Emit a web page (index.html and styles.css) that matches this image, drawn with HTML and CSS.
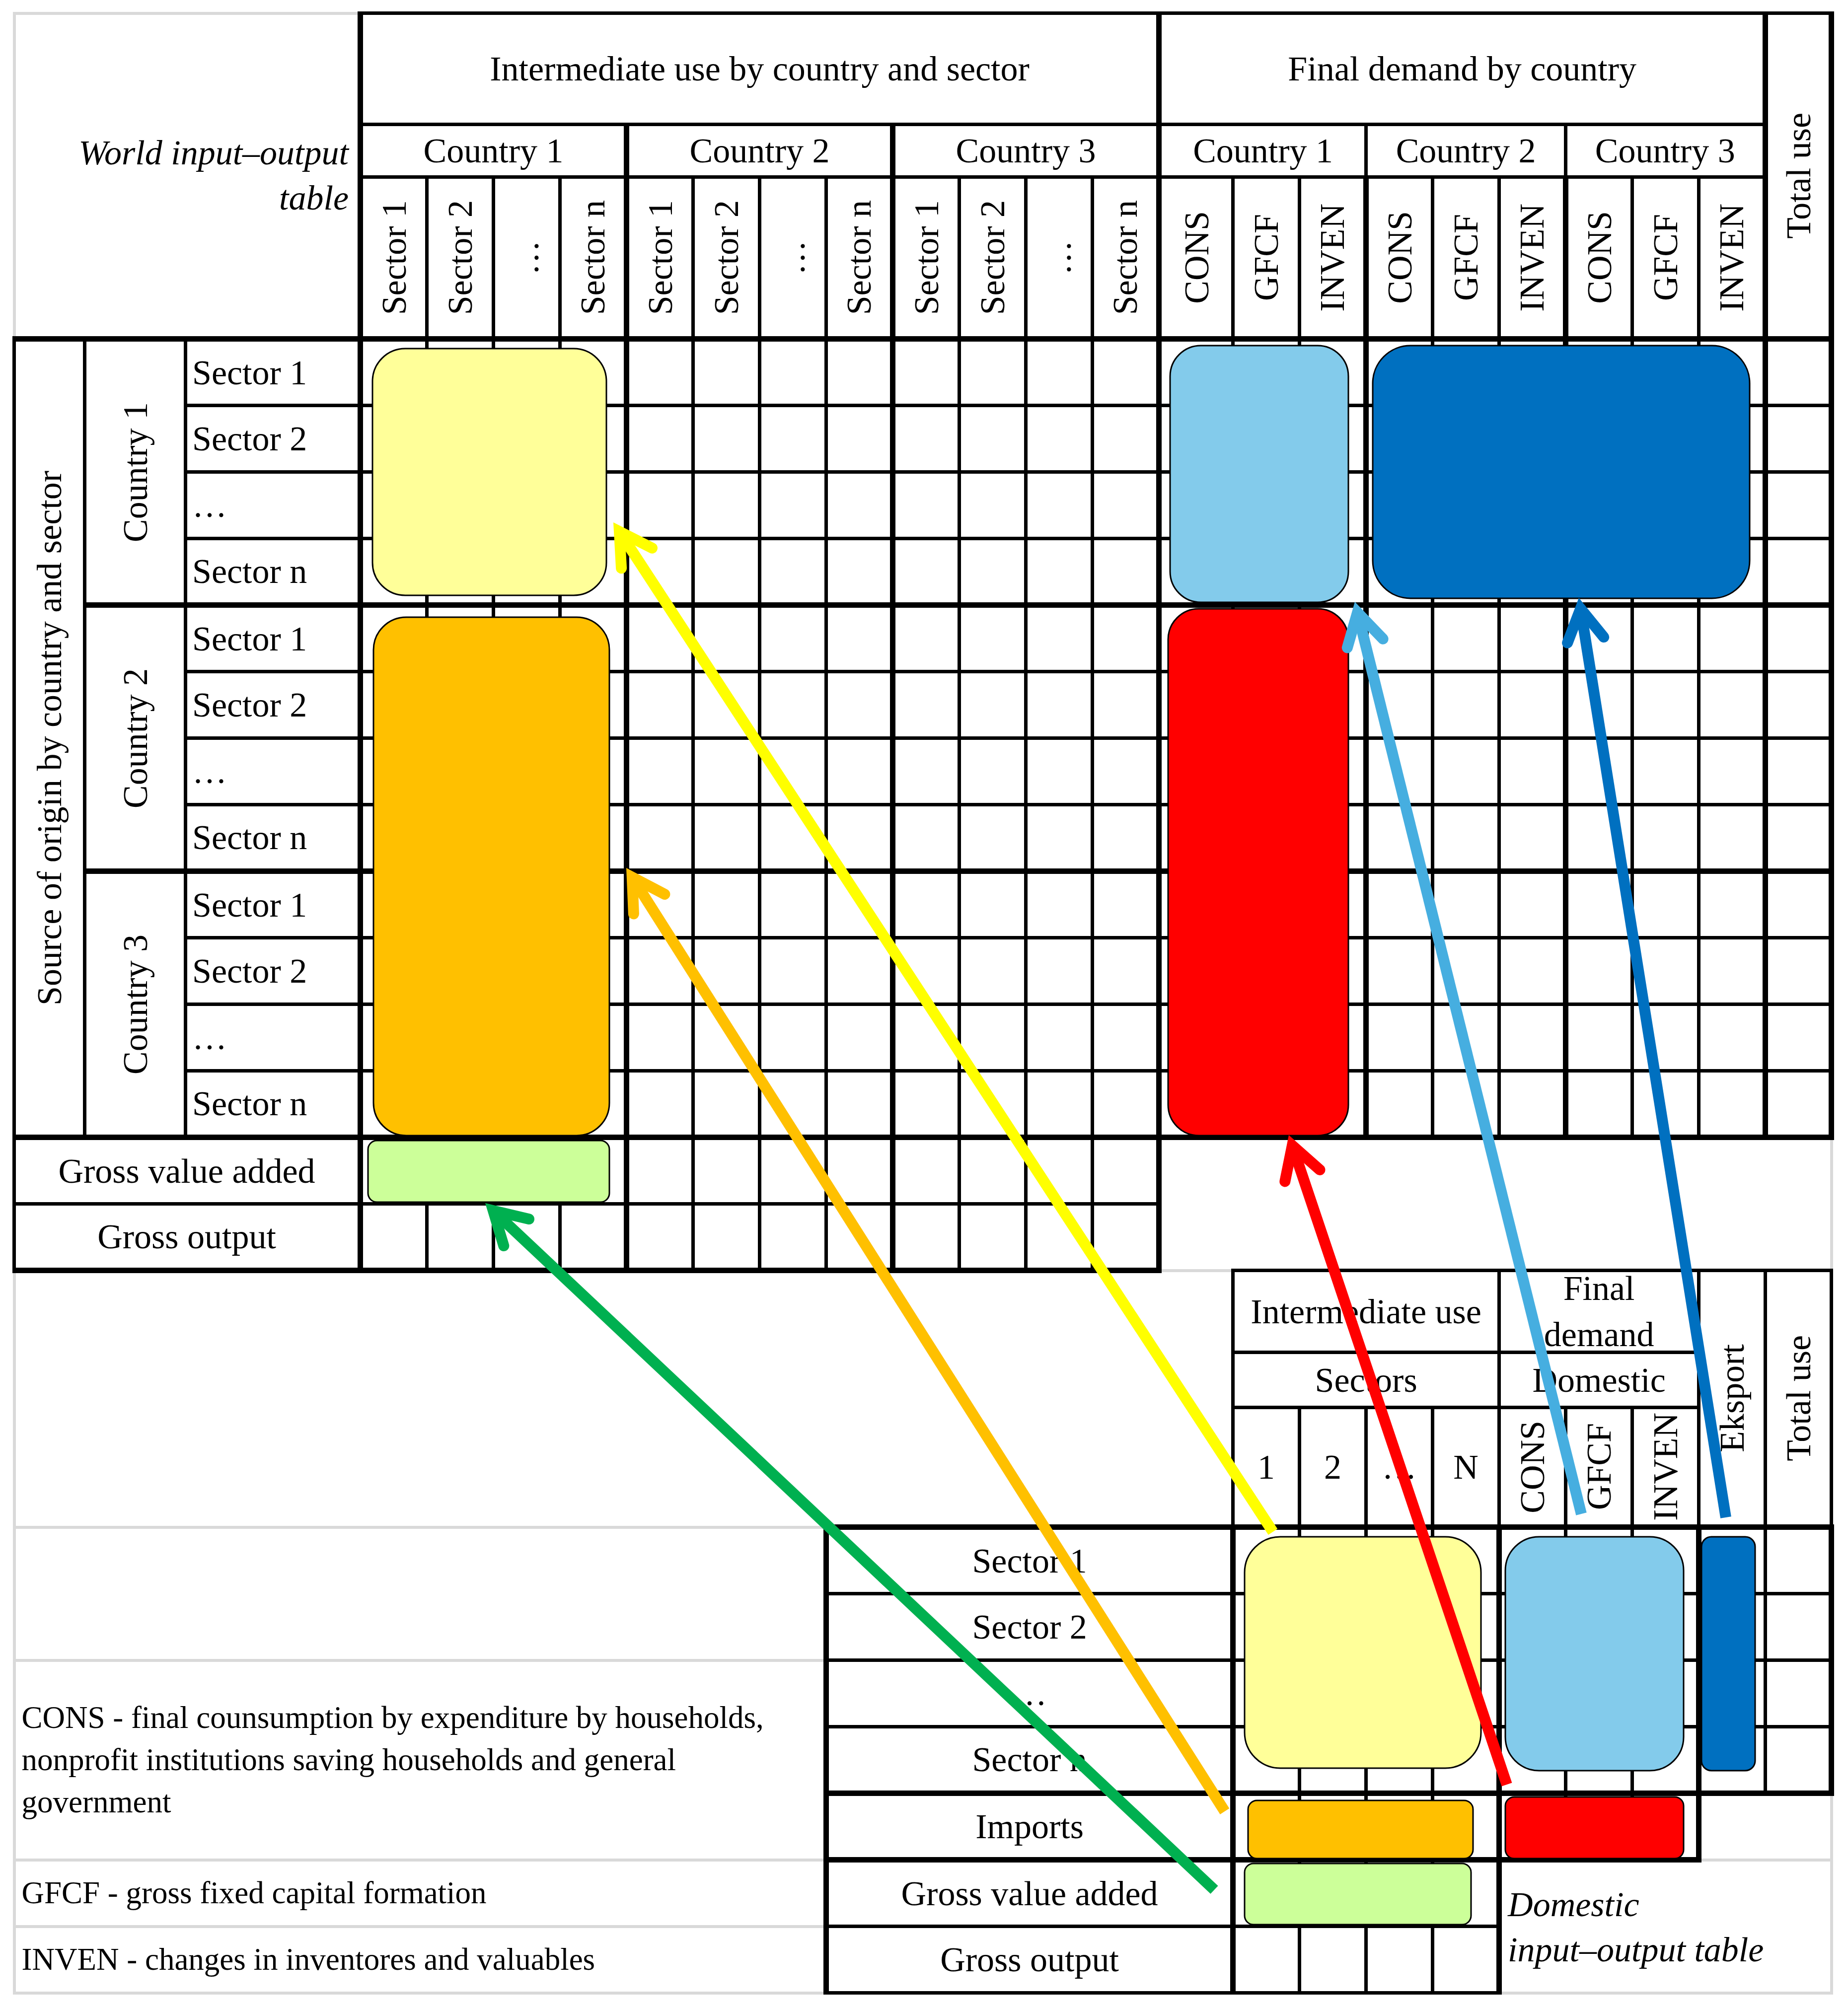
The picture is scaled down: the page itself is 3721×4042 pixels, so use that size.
FILE: index.html
```html
<!DOCTYPE html>
<html lang="en">
<head>
<meta charset="utf-8">
<title>World input–output table</title>
<link rel="stylesheet" href="styles.css">
</head>
<body>
<div class="page">
<table class="wiot">
<colgroup>
<col class="c-src"><col class="c-cty"><col class="c-sec">
<col class="c-int tk"><col class="c-int"><col class="c-int"><col class="c-int">
<col class="c-int tk"><col class="c-int"><col class="c-int"><col class="c-int">
<col class="c-int tk"><col class="c-int"><col class="c-int"><col class="c-int">
<col class="c-cons tk">
<col class="c-fd"><col class="c-fd"><col class="c-fd"><col class="c-fd"><col class="c-fd"><col class="c-fd"><col class="c-fd"><col class="c-fd">
<col class="c-tot">
</colgroup>
<tbody>
<tr class="hr1">
<td class="corner blank gt gl" rowspan="3" colspan="3">World input–output<br>table</td>
<td colspan="12">Intermediate use by country and sector</td>
<td colspan="9">Final demand by country</td>
<td class="L R" rowspan="3"><div class="vt">Total use</div></td>
</tr>
<tr class="hr2">
<td colspan="4">Country 1</td><td colspan="4">Country 2</td><td colspan="4">Country 3</td>
<td colspan="3">Country 1</td><td colspan="3">Country 2</td><td colspan="3">Country 3</td>
</tr>
<tr class="hr3">
<td><div class="vt">Sector 1</div></td><td><div class="vt">Sector 2</div></td><td><div class="vt">…</div></td><td><div class="vt">Sector n</div></td>
<td><div class="vt">Sector 1</div></td><td><div class="vt">Sector 2</div></td><td><div class="vt">…</div></td><td><div class="vt">Sector n</div></td>
<td><div class="vt">Sector 1</div></td><td><div class="vt">Sector 2</div></td><td><div class="vt">…</div></td><td><div class="vt">Sector n</div></td>
<td><div class="vt">CONS</div></td><td><div class="vt">GFCF</div></td><td><div class="vt">INVEN</div></td>
<td class="L"><div class="vt">CONS</div></td><td><div class="vt">GFCF</div></td><td><div class="vt">INVEN</div></td>
<td class="L"><div class="vt">CONS</div></td><td><div class="vt">GFCF</div></td><td><div class="vt">INVEN</div></td>
</tr>

<tr class="row T">
<td rowspan="12"><div class="vt">Source of origin by country and sector</div></td>
<td rowspan="4"><div class="vt">Country 1</div></td>
<td class="lab">Sector 1</td>
<td></td><td></td><td></td><td></td><td></td><td></td><td></td><td></td><td></td><td></td><td></td><td></td>
<td></td><td></td><td></td><td class="L"></td><td></td><td></td><td class="L"></td><td></td><td></td><td class="L R"></td>
</tr>
<tr class="row">
<td class="lab">Sector 2</td>
<td></td><td></td><td></td><td></td><td></td><td></td><td></td><td></td><td></td><td></td><td></td><td></td>
<td></td><td></td><td></td><td class="L"></td><td></td><td></td><td class="L"></td><td></td><td></td><td class="L R"></td>
</tr>
<tr class="row">
<td class="lab">…</td>
<td></td><td></td><td></td><td></td><td></td><td></td><td></td><td></td><td></td><td></td><td></td><td></td>
<td></td><td></td><td></td><td class="L"></td><td></td><td></td><td class="L"></td><td></td><td></td><td class="L R"></td>
</tr>
<tr class="row">
<td class="lab">Sector n</td>
<td></td><td></td><td></td><td></td><td></td><td></td><td></td><td></td><td></td><td></td><td></td><td></td>
<td></td><td></td><td></td><td class="L"></td><td></td><td></td><td class="L"></td><td></td><td></td><td class="L R"></td>
</tr>

<tr class="row T">
<td rowspan="4"><div class="vt">Country 2</div></td>
<td class="lab">Sector 1</td>
<td></td><td></td><td></td><td></td><td></td><td></td><td></td><td></td><td></td><td></td><td></td><td></td>
<td></td><td></td><td></td><td class="L"></td><td></td><td></td><td class="L"></td><td></td><td></td><td class="L R"></td>
</tr>
<tr class="row">
<td class="lab">Sector 2</td>
<td></td><td></td><td></td><td></td><td></td><td></td><td></td><td></td><td></td><td></td><td></td><td></td>
<td></td><td></td><td></td><td class="L"></td><td></td><td></td><td class="L"></td><td></td><td></td><td class="L R"></td>
</tr>
<tr class="row">
<td class="lab">…</td>
<td></td><td></td><td></td><td></td><td></td><td></td><td></td><td></td><td></td><td></td><td></td><td></td>
<td></td><td></td><td></td><td class="L"></td><td></td><td></td><td class="L"></td><td></td><td></td><td class="L R"></td>
</tr>
<tr class="row">
<td class="lab">Sector n</td>
<td></td><td></td><td></td><td></td><td></td><td></td><td></td><td></td><td></td><td></td><td></td><td></td>
<td></td><td></td><td></td><td class="L"></td><td></td><td></td><td class="L"></td><td></td><td></td><td class="L R"></td>
</tr>

<tr class="row T">
<td rowspan="4"><div class="vt">Country 3</div></td>
<td class="lab">Sector 1</td>
<td></td><td></td><td></td><td></td><td></td><td></td><td></td><td></td><td></td><td></td><td></td><td></td>
<td></td><td></td><td></td><td class="L"></td><td></td><td></td><td class="L"></td><td></td><td></td><td class="L R"></td>
</tr>
<tr class="row">
<td class="lab">Sector 2</td>
<td></td><td></td><td></td><td></td><td></td><td></td><td></td><td></td><td></td><td></td><td></td><td></td>
<td></td><td></td><td></td><td class="L"></td><td></td><td></td><td class="L"></td><td></td><td></td><td class="L R"></td>
</tr>
<tr class="row">
<td class="lab">…</td>
<td></td><td></td><td></td><td></td><td></td><td></td><td></td><td></td><td></td><td></td><td></td><td></td>
<td></td><td></td><td></td><td class="L"></td><td></td><td></td><td class="L"></td><td></td><td></td><td class="L R"></td>
</tr>
<tr class="row">
<td class="lab">Sector n</td>
<td></td><td></td><td></td><td></td><td></td><td></td><td></td><td></td><td></td><td></td><td></td><td></td>
<td></td><td></td><td></td><td class="L"></td><td></td><td></td><td class="L"></td><td></td><td></td><td class="L R"></td>
</tr>

<tr class="row T">
<td colspan="3">Gross value added</td>
<td></td><td></td><td></td><td></td><td></td><td></td><td></td><td></td><td></td><td></td><td></td><td></td>
<td class="blank gr gb" colspan="10" rowspan="2"></td>
</tr>
<tr class="row">
<td class="B" colspan="3">Gross output</td>
<td class="B"></td><td class="B"></td><td class="B"></td><td class="B"></td><td class="B"></td><td class="B"></td><td class="B"></td><td class="B"></td><td class="B"></td><td class="B"></td><td class="B"></td><td class="B"></td>
</tr>

<tr class="hb1">
<td class="blank gl gt" colspan="16" rowspan="3"></td>
<td colspan="4">Intermediate use</td>
<td colspan="3"><div class="two">Final<br>demand</div></td>
<td rowspan="3"><div class="vt">Eksport</div></td>
<td rowspan="3"><div class="vt">Total use</div></td>
</tr>
<tr class="hb2">
<td colspan="4">Sectors</td>
<td colspan="3">Domestic</td>
</tr>
<tr class="hb3">
<td>1</td><td>2</td><td>…</td><td>N</td>
<td><div class="vt">CONS</div></td><td><div class="vt">GFCF</div></td><td><div class="vt">INVEN</div></td>
</tr>

<tr class="row">
<td class="g" colspan="10" rowspan="2"></td>
<td class="L T" colspan="6">Sector 1</td>
<td class="L T"></td><td class="T"></td><td class="T"></td><td class="T"></td><td class="L T"></td><td class="T"></td><td class="T"></td><td class="L T"></td><td class="T R"></td>
</tr>
<tr class="row">
<td class="L" colspan="6">Sector 2</td>
<td class="L"></td><td></td><td></td><td></td><td class="L"></td><td></td><td></td><td class="L"></td><td class="R"></td>
</tr>
<tr class="row">
<td class="g leg" colspan="10" rowspan="3">CONS - final counsumption by expenditure by households,<br>nonprofit institutions saving households and general<br>government</td>
<td class="L" colspan="6">…</td>
<td class="L"></td><td></td><td></td><td></td><td class="L"></td><td></td><td></td><td class="L"></td><td class="R"></td>
</tr>
<tr class="row">
<td class="L" colspan="6">Sector n</td>
<td class="L"></td><td></td><td></td><td></td><td class="L"></td><td></td><td></td><td class="L"></td><td class="R"></td>
</tr>
<tr class="row">
<td class="L T B" colspan="6">Imports</td>
<td class="L T B"></td><td class="T B"></td><td class="T B"></td><td class="T B"></td><td class="L T B"></td><td class="T B"></td><td class="T B R"></td>
<td class="blank T gr gb" colspan="2"></td>
</tr>
<tr class="row">
<td class="g leg" colspan="10">GFCF - gross fixed capital formation</td>
<td class="L" colspan="6">Gross value added</td>
<td class="L"></td><td></td><td></td><td class="R"></td>
<td class="blank gr gb dom" colspan="5" rowspan="2">Domestic<br>input–output table</td>
</tr>
<tr class="row">
<td class="g leg" colspan="10">INVEN - changes in inventores and valuables</td>
<td class="L" colspan="6">Gross output</td>
<td class="L"></td><td></td><td></td><td class="R"></td>
</tr>
</tbody>
</table>

<svg class="overlay" viewBox="0 0 3721 4042" width="3721" height="4042" aria-hidden="true">
<g stroke="#000" stroke-width="3">
<rect x="750" y="702" width="471" height="497" rx="66" fill="#FFFF99"/>
<rect x="752" y="1243" width="475" height="1044" rx="66" fill="#FFC000"/>
<rect x="741" y="2297" width="486" height="124" rx="18" fill="#CCFF99"/>
<rect x="2356" y="696" width="359" height="517" rx="62" fill="#83CBEB"/>
<rect x="2764" y="696" width="759" height="509" rx="76" fill="#0070C0"/>
<rect x="2352" y="1226" width="363" height="1061" rx="62" fill="#FF0000"/>
<rect x="2506" y="3095" width="476" height="466" rx="72" fill="#FFFF99"/>
<rect x="3031" y="3095" width="359" height="471" rx="68" fill="#83CBEB"/>
<rect x="3426" y="3095" width="108" height="471" rx="20" fill="#0070C0"/>
<rect x="2513" y="3626" width="453" height="117" rx="18" fill="#FFC000"/>
<rect x="3031" y="3619" width="359" height="124" rx="18" fill="#FF0000"/>
<rect x="2506" y="3753" width="456" height="123" rx="18" fill="#CCFF99"/>
</g>
<g fill="none" stroke-width="22">
<g stroke="#FFFF00">
<path d="M2563 3085 L1247 1070.4"/>
<path class="head" d="M1251.1 1144.3 L1247 1070.4 L1313 1103.8"/>
</g>
<g stroke="#FFC000">
<path d="M2466 3648 L1272.8 1766.6"/>
<path class="head" d="M1275.9 1840.5 L1272.8 1766.6 L1338.4 1800.9"/>
</g>
<g stroke="#00B050">
<path d="M2445 3806 L993 2438.1"/>
<path class="head" d="M1014.3 2509 L993 2438.1 L1065 2455.1"/>
</g>
<g stroke="#FF0000">
<path d="M3034 3594 L2602 2306.9"/>
<path class="head" d="M2587.3 2379.4 L2602 2306.9 L2657.5 2355.9"/>
</g>
<g stroke="#46AEE0">
<path d="M3184 3049 L2733.3 1233.4"/>
<path class="head" d="M2712.8 1304.5 L2733.3 1233.4 L2784.6 1286.7"/>
</g>
<g stroke="#0070C0">
<path d="M3475 3056 L3182.5 1225.7"/>
<path class="head" d="M3156.1 1294.8 L3182.5 1225.7 L3229.2 1283.1"/>
</g>
</g>
</svg>
</div>
</body>
</html>
```

FILE: styles.css
```css
html, body {
  margin: 0;
  padding: 0;
  background: #fff;
}

body {
  font-family: "Liberation Serif", "Times New Roman", serif;
  color: #000;
}

.page {
  position: relative;
  box-sizing: border-box;
  width: 3721px;
  height: 4042px;
  padding: 23px 0 0 25px;
}

.wiot {
  border-collapse: collapse;
  table-layout: fixed;
  width: 3668px;
  font-size: 70px;
  line-height: 91px;
}

td {
  border: 7px solid #000;
  padding: 0;
  text-align: center;
  vertical-align: middle;
  white-space: nowrap;
}

/* column widths */
.c-src { width: 142px; }
.c-cty { width: 203px; }
.c-sec { width: 352px; }
.c-int { width: 134px; }
.c-cons { width: 149px; }
.c-fd { width: 134px; }
.c-tot { width: 133px; }
col.tk { border-left: 11px solid #000; }

/* row heights */
.hr1 { height: 224px; }
.hr2 { height: 106px; }
.hr3 { height: 326px; }
.row { height: 134px; }
.hb1 { height: 165px; }
.hb2 { height: 111px; }
.hb3 { height: 241px; }

/* border variants */
.blank { border: none; }
.g { border: 6px solid #d9d9d9; }
.gl { border-left: 6px solid #d9d9d9; }
.gt { border-top: 6px solid #d9d9d9; }
.gr { border-right: 6px solid #d9d9d9; }
.gb { border-bottom: 6px solid #d9d9d9; }
.L { border-left: 11px solid #000; }
.R { border-right: 11px solid #000; }
.T { border-top: 11px solid #000; }
.B { border-bottom: 11px solid #000; }

/* text */
.corner {
  text-align: right;
  padding-right: 18px;
  font-style: italic;
}

.lab {
  text-align: left;
  padding-left: 10px;
}

.leg {
  text-align: left;
  padding-left: 12px;
  font-size: 63px;
  line-height: 85px;
}

.dom {
  text-align: left;
  padding-left: 12px;
  font-style: italic;
}

.two {
  line-height: 93px;
  margin: -16px 0;
}

.vt {
  writing-mode: vertical-rl;
  transform: rotate(180deg);
  margin: 0 auto;
  line-height: 1.1;
  white-space: nowrap;
}

.overlay {
  position: absolute;
  left: 0;
  top: 0;
  width: 3721px;
  height: 4042px;
  pointer-events: none;
}

.overlay .head {
  stroke-linecap: round;
  stroke-linejoin: miter;
}
```
